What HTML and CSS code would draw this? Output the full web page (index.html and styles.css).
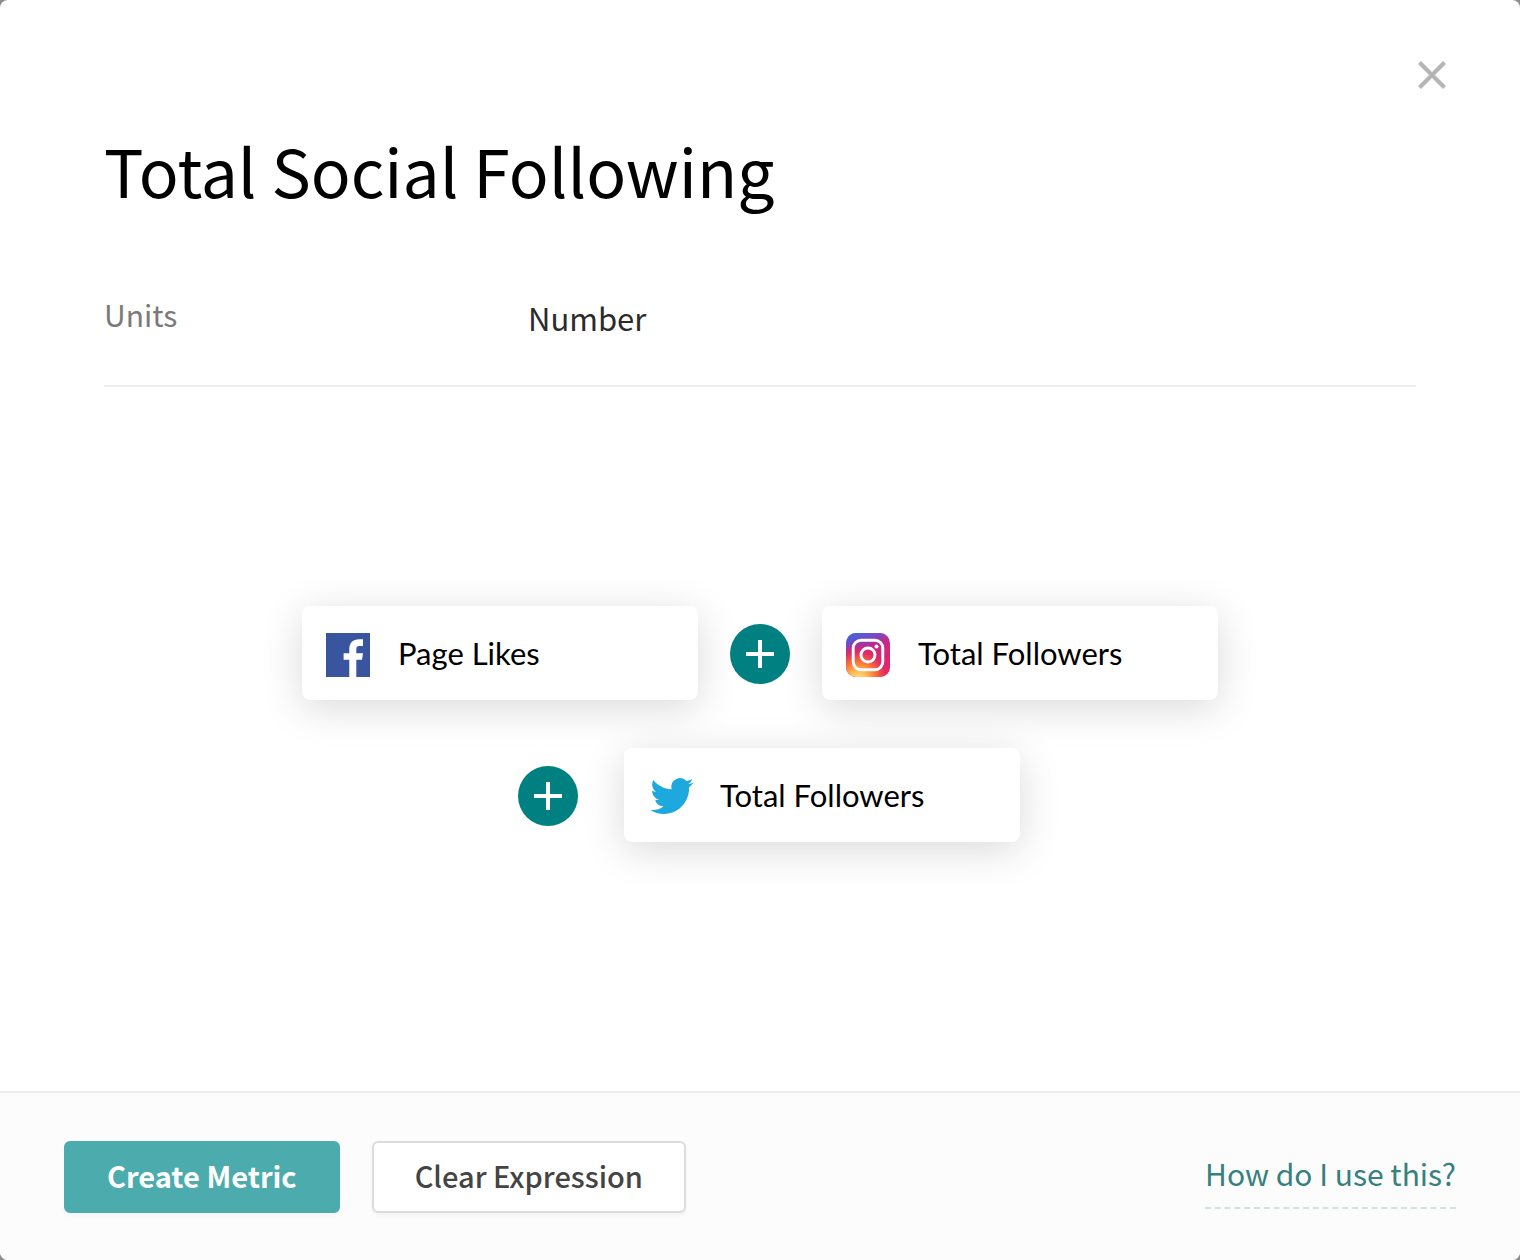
FILE: index.html
```html
<!DOCTYPE html>
<html lang="en">

<head>
  <meta charset="UTF-8">
  <meta name="viewport" content="width=device-width, initial-scale=1.0">
  <title>Total Social Following</title>
  <link rel="stylesheet" href="styles.css">
</head>

<body>
  <div class="modal">
    <header class="modal-header">
      <button class="close" type="button" aria-label="Close">
        <svg width="28" height="28" viewBox="0 0 28 28">
          <path d="M1.5 1.5L26.5 26.5M26.5 1.5L1.5 26.5" stroke="#b5b5b5" stroke-width="4.2" />
        </svg>
      </button>
    </header>

    <main class="modal-body">
      <h1>Total Social Following</h1>

      <dl class="units">
        <dt>Units</dt>
        <dd>Number</dd>
      </dl>

      <div class="expression">
        <div class="expression-row">
          <div class="metric">
            <svg class="metric-icon" viewBox="0 0 44 44">
              <rect width="44" height="44" fill="#3a559f" />
              <path d="M23.3 44V26.8H17.6V20.2H23.3V16.2C23.3 9.8 27 6.2 33 6.2H37V13H33.4C31 13 30.3 14.2 30.3 16.2V20.2H37L36 26.8H30.3V44Z" fill="#fff" />
            </svg>
            <span>Page Likes</span>
          </div>
          <button class="operator" type="button" aria-label="Plus">
            <svg width="28" height="28" viewBox="0 0 28 28">
              <path d="M14 0V28M0 14H28" stroke="#fff" stroke-width="4" />
            </svg>
          </button>
          <div class="metric">
            <svg class="metric-icon" viewBox="0 0 44 44">
              <defs>
                <linearGradient id="ig-base" x1="0" y1="0" x2="1" y2="0.6">
                  <stop offset="0" stop-color="#5b4fd0" />
                  <stop offset="0.45" stop-color="#b02ca0" />
                  <stop offset="1" stop-color="#e1236f" />
                </linearGradient>
                <linearGradient id="ig-top" x1="0.3" y1="0" x2="0.36" y2="0.3">
                  <stop offset="0" stop-color="#4a62dc" />
                  <stop offset="1" stop-color="#4a62dc" stop-opacity="0" />
                </linearGradient>
                <radialGradient id="ig-warm" cx="0.28" cy="1.05" r="0.85">
                  <stop offset="0" stop-color="#ffdc7d" />
                  <stop offset="0.2" stop-color="#ffc45a" />
                  <stop offset="0.5" stop-color="#fa6a38" />
                  <stop offset="0.75" stop-color="#e42b62" stop-opacity="0.8" />
                  <stop offset="1" stop-color="#e1236f" stop-opacity="0" />
                </radialGradient>
              </defs>
              <rect width="44" height="44" rx="10" fill="url(#ig-base)" />
              <rect width="44" height="44" rx="10" fill="url(#ig-top)" />
              <rect width="44" height="44" rx="10" fill="url(#ig-warm)" />
              <rect x="7.2" y="7.2" width="29.6" height="29.6" rx="8" fill="none" stroke="#fff" stroke-width="2.9" />
              <circle cx="22" cy="22" r="7" fill="none" stroke="#fff" stroke-width="2.9" />
              <circle cx="30.5" cy="13.5" r="2" fill="#fff" />
            </svg>
            <span>Total Followers</span>
          </div>
        </div>

        <div class="expression-row">
          <button class="operator operator-first" type="button" aria-label="Plus">
            <svg width="28" height="28" viewBox="0 0 28 28">
              <path d="M14 0V28M0 14H28" stroke="#fff" stroke-width="4" />
            </svg>
          </button>
          <div class="metric">
            <svg class="metric-icon" viewBox="-1.3 0.5 24 24">
              <path transform="scale(0.98 1)" d="M23.953 4.57a10 10 0 01-2.825.775 4.958 4.958 0 002.163-2.723c-.951.555-2.005.959-3.127 1.184a4.92 4.92 0 00-8.384 4.482C7.69 8.095 4.067 6.13 1.64 3.162a4.822 4.822 0 00-.666 2.475c0 1.71.87 3.213 2.188 4.096a4.904 4.904 0 01-2.228-.616v.06a4.923 4.923 0 003.946 4.827 4.996 4.996 0 01-2.212.085 4.936 4.936 0 004.604 3.417 9.867 9.867 0 01-6.102 2.105c-.39 0-.779-.023-1.17-.067a13.995 13.995 0 007.557 2.209c9.053 0 13.998-7.496 13.998-13.985 0-.21 0-.42-.015-.63A9.935 9.935 0 0024 4.59z" fill="#1da9de" />
            </svg>
            <span>Total Followers</span>
          </div>
        </div>
      </div>
    </main>

    <footer class="modal-footer">
      <button class="btn btn-primary" type="button">Create Metric</button>
      <button class="btn" type="button">Clear Expression</button>
      <a class="help" href="#help">How do I use this?</a>
    </footer>
  </div>
</body>

</html>
```

FILE: styles.css
```css
* {
  box-sizing: border-box;
}

body {
  margin: 0;
  background-color: #8c8c8c;
  font-family: "Noto Sans CJK SC", "Noto Sans", sans-serif;
}

.modal {
  display: flex;
  flex-direction: column;
  min-height: 100vh;
  background-color: #fff;
  border-radius: 8px;
  overflow: hidden;
}

button {
  font-family: inherit;
  cursor: pointer;
}

/* header */
.modal-header {
  display: flex;
  justify-content: flex-end;
  padding: 61px 74px 0;
}

.close {
  display: flex;
  padding: 0;
  border: none;
  background: none;
}

.modal-body {
  flex: 1;
  display: flex;
  flex-direction: column;
  padding: 32px 104px 0;
}

h1 {
  margin: 0;
  font-size: 66px;
  line-height: 96px;
  font-weight: 400;
  color: #000;
}

.units {
  display: grid;
  grid-template-columns: 424px 1fr;
  margin: 0;
  padding: 73px 0 43px;
  border-bottom: 2px solid #ececec;
  line-height: 48px;
}

.units dt {
  font-size: 30px;
  color: #7a7a7a;
}

.units dd {
  margin: 4px 0 0;
  font-size: 31px;
  color: #2b2b2b;
}

/* expression builder */
.expression {
  flex: 1;
  display: flex;
  flex-direction: column;
  justify-content: center;
  gap: 48px;
  padding-bottom: 30px;
}

.expression-row {
  display: flex;
  justify-content: center;
  align-items: center;
}

.metric {
  display: flex;
  align-items: center;
  gap: 28px;
  width: 396px;
  height: 94px;
  padding: 0 24px;
  background-color: #fff;
  border-radius: 8px;
  box-shadow: 0 8px 40px rgba(0, 0, 0, 0.15);
  font-family: Lato, sans-serif;
  font-size: 31px;
  color: #000;
}

.metric-icon {
  width: 44px;
  height: 44px;
  margin-top: 4px;
  overflow: visible;
}

.operator {
  display: flex;
  justify-content: center;
  align-items: center;
  width: 60px;
  height: 60px;
  margin: 2px 32px 0;
  padding: 0;
  border: none;
  border-radius: 50%;
  background-color: #008080;
}

.operator-first {
  margin: 2px 46px 0 18px;
}

/* footer */
.modal-footer {
  display: flex;
  align-items: center;
  gap: 32px;
  padding: 48px 64px 47px;
  border-top: 2px solid #ececec;
  background-color: #fcfcfc;
}

.btn {
  height: 72px;
  padding: 0 41px 4px;
  border: 2px solid #dcdcdc;
  border-radius: 6px;
  background-color: #fff;
  box-shadow: 0 2px 4px rgba(0, 0, 0, 0.04);
  font-size: 29px;
  font-weight: 500;
  color: #444;
}

.btn-primary {
  border-color: #4babad;
  background-color: #4babad;
  font-weight: 700;
  color: #fff;
}

.help {
  margin-left: auto;
  padding-bottom: 6px;
  border-bottom: 2px dashed #d0e3e3;
  font-size: 30px;
  line-height: 56px;
  color: #36807f;
  text-decoration: none;
}
```
